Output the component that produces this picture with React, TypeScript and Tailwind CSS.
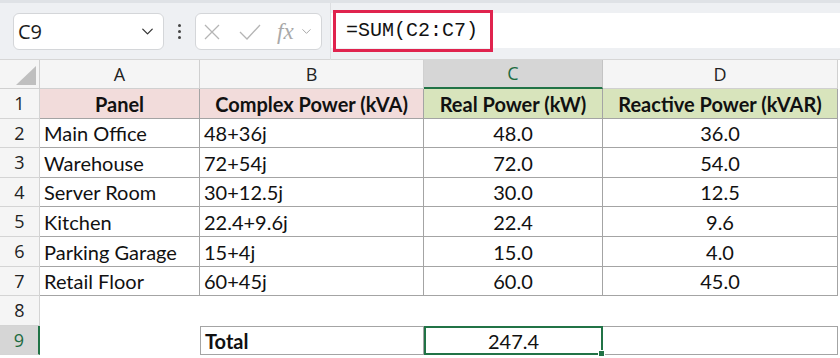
import { ChevronDown } from "lucide-react";

type Row = { n: number; a: string; b: string; c: string; d: string };

const rows: Row[] = [
  { n: 2, a: "Main Office", b: "48+36j", c: "48.0", d: "36.0" },
  { n: 3, a: "Warehouse", b: "72+54j", c: "72.0", d: "54.0" },
  { n: 4, a: "Server Room", b: "30+12.5j", c: "30.0", d: "12.5" },
  { n: 5, a: "Kitchen", b: "22.4+9.6j", c: "22.4", d: "9.6" },
  { n: 6, a: "Parking Garage", b: "15+4j", c: "15.0", d: "4.0" },
  { n: 7, a: "Retail Floor", b: "60+45j", c: "60.0", d: "45.0" },
];

const cellFont = "font-['Lato','Open_Sans',sans-serif] text-[20px] text-[#111]";
const rowHead =
  "flex items-center justify-center bg-[#f5f5f5] border-r border-b border-[#d4d4d4] text-[18px] text-[#222] font-['Open_Sans',sans-serif]";
const colHead =
  "flex items-center justify-center bg-[#f5f5f5] border-r border-b border-[#d0d0d0] text-[18px] text-[#222] font-['Open_Sans',sans-serif]";
const data = "flex items-center border-r border-b border-[#a4a4a4] px-1";

function Toolbar() {
  return (
    <div className="relative h-[60px] bg-[#eef0f3] border-b border-[#d6d6d6]">
      <div className="absolute inset-x-0 top-0 h-[3px] bg-[#dfe2e6]" />
      <div className="flex h-full items-start pt-[13px]">
        {/* name box */}
        <div className="ml-[13px] flex h-[37px] w-[151px] items-center justify-between rounded-[6px] border border-[#d4d6d9] bg-white pl-[4px] pr-[6px]">
          <span className="font-['Open_Sans',sans-serif] text-[20px] text-[#1b1b1b]">C9</span>
          <ChevronDown className="h-[19px] w-[19px] text-[#333]" strokeWidth={1.6} />
        </div>
        {/* dots */}
        <div className="ml-[13px] mt-[11px] flex w-[5px] flex-col items-center gap-[3px]">
          <span className="h-[3px] w-[3px] rounded-full bg-[#444]" />
          <span className="h-[3px] w-[3px] rounded-full bg-[#444]" />
          <span className="h-[3px] w-[3px] rounded-full bg-[#444]" />
        </div>
        {/* function buttons */}
        <div className="ml-[13px] flex h-[37px] w-[127px] items-center rounded-[6px] border border-[#d4d6d9] bg-white pl-[8px]">
          <svg width="16" height="16" viewBox="0 0 16 16" className="text-[#b5b5b5]">
            <path d="M1 1 L15 15 M15 1 L1 15" stroke="currentColor" strokeWidth="1.3" fill="none" />
          </svg>
          <svg width="22" height="16" viewBox="0 0 22 16" className="ml-[19px] text-[#b5b5b5]">
            <path d="M1 8 L8 15 L21 1" stroke="currentColor" strokeWidth="1.3" fill="none" />
          </svg>
          <span className="ml-[16px] font-['Liberation_Serif',serif] text-[23px] italic leading-none text-[#a9a9a9]">fx</span>
          <ChevronDown className="ml-[5px] h-[15px] w-[15px] text-[#a9a9a9]" strokeWidth={1.6} />
        </div>
        <div className="ml-[8px] h-[60px] -mt-[13px] w-px bg-[#dcdee1]" />
        {/* formula input */}
        <div className="relative h-[35px] flex-1 bg-white">
          <div className="absolute left-[2px] -top-[3px] h-[42px] w-[160px] border-[3px] border-[#e0234e]" />
          <span className="absolute left-[15px] top-[4px] font-['Liberation_Mono',monospace] text-[20px] leading-[28px] text-[#111]">
            =SUM(C2:C7)
          </span>
        </div>
      </div>
    </div>
  );
}

export default function App() {
  return (
    <div className="h-[358px] w-[840px] overflow-hidden bg-white">
      <Toolbar />
      <div className="grid grid-cols-[40px_160px_224px_179px_235px] grid-rows-[29px_30px_29px_30px_29px_30px_30px_29px_30px_29px]">
        {/* column headers */}
        <div className={`${colHead} relative`}>
          <svg width="20" height="19" viewBox="0 0 20 19" className="absolute left-[16px] top-[6px]">
            <path d="M20 0 L20 19 L0 19 Z" fill="#bfbfbf" />
          </svg>
        </div>
        <div className={colHead}>A</div>
        <div className={colHead}>B</div>
        <div className="flex items-center justify-center border-r border-b-2 border-r-[#c4c4c4] border-b-[#217346] bg-[#d6d6d6] font-['Open_Sans',sans-serif] text-[18px] text-[#1e6b41]">
          C
        </div>
        <div className={colHead}>D</div>

        {/* row 1 */}
        <div className={rowHead}>1</div>
        <div className={`${data} justify-center bg-[#f2dcdb] font-bold ${cellFont}`}>Panel</div>
        <div className={`${data} justify-center bg-[#f2dcdb] font-bold ${cellFont}`}>Complex Power (kVA)</div>
        <div className={`${data} justify-center bg-[#d8e4bc] font-bold ${cellFont}`}>Real Power (kW)</div>
        <div className={`${data} justify-center bg-[#d8e4bc] font-bold ${cellFont}`}>Reactive Power (kVAR)</div>

        {rows.map((r) => (
          <div key={r.n} className="contents">
            <div className={rowHead}>{r.n}</div>
            <div className={`${data} ${cellFont}`}>{r.a}</div>
            <div className={`${data} ${cellFont}`}>{r.b}</div>
            <div className={`${data} justify-center ${cellFont}`}>{r.c}</div>
            <div className={`${data} justify-center ${cellFont}`}>{r.d}</div>
          </div>
        ))}

        {/* row 8 */}
        <div className={rowHead}>8</div>
        <div />
        <div />
        <div />
        <div />

        {/* row 9 */}
        <div className="flex items-center justify-center border-r-2 border-b border-r-[#217346] border-b-[#d4d4d4] bg-[#d6d6d6] font-['Open_Sans',sans-serif] text-[18px] text-[#1e6b41]">
          9
        </div>
        <div />
        <div className={`${data} border-t border-l font-bold ${cellFont}`}>Total</div>
        <div className={`relative flex items-center justify-center border-2 border-[#217346] ${cellFont}`}>
          247.4
          <span className="absolute -bottom-[4px] -right-[4px] h-[7px] w-[7px] border border-white bg-[#217346]" />
        </div>
        <div className={`${data} border-t`} />
      </div>
    </div>
  );
}
